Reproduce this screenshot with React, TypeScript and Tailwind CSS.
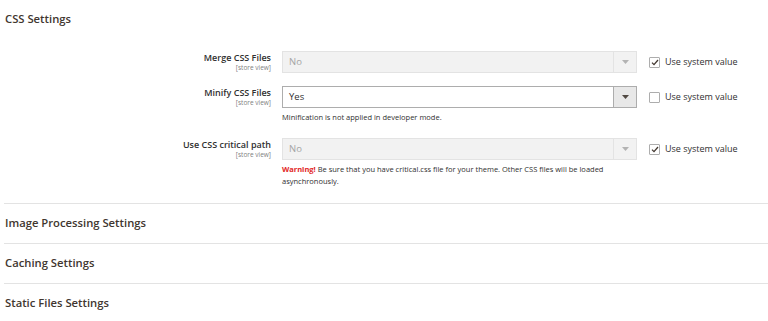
import type { ReactNode } from "react";

function Caret({ disabled }: { disabled?: boolean }) {
  return (
    <svg width="7" height="4" viewBox="0 0 7 4">
      <path d="M0 0h7L3.5 4z" fill={disabled ? "#b3b3b3" : "#514943"} />
    </svg>
  );
}

function Select({ value, disabled }: { value: string; disabled?: boolean }) {
  return (
    <div
      className={`flex h-[22px] w-[355px] items-stretch border ${
        disabled ? "border-[#e3e3e3] bg-[#f2f2f2] text-[#a5a5a5]" : "border-[#adadad] bg-white text-[#303030]"
      }`}
    >
      <div className="flex flex-1 items-center pl-[6px] text-[9.5px]">{value}</div>
      <div
        className={`flex w-[23px] items-center justify-center border-l ${
          disabled ? "border-[#e3e3e3] bg-[#f2f2f2]" : "border-[#adadad] bg-[#e8e8e8]"
        }`}
      >
        <Caret disabled={disabled} />
      </div>
    </div>
  );
}

function SystemValue({ checked }: { checked: boolean }) {
  return (
    <label className="flex items-center gap-[5px] text-[9px] text-[#303030]">
      <span className="flex h-[11px] w-[11px] items-center justify-center rounded-[1px] border border-[#adadad] bg-white">
        {checked && (
          <svg width="8" height="7" viewBox="0 0 8 7">
            <path d="M1 3.6l2 2L7 1" fill="none" stroke="#41362f" strokeWidth="1.3" />
          </svg>
        )}
      </span>
      Use system value
    </label>
  );
}

function Row({ label, value, disabled, checked, note }: { label: string; value: string; disabled?: boolean; checked: boolean; note?: ReactNode }) {
  return (
    <div className="flex items-start">
      <div className="w-[271px] pt-[1px] text-right">
        <div className="text-[9px] leading-[11px] font-semibold text-[#303030]">{label}</div>
        <div className="text-[6.5px] leading-[9px] text-[#808080]">[store view]</div>
      </div>
      <div className="ml-[11px] w-[355px]">
        <Select value={value} disabled={disabled} />
        {note && <div className="mt-[3px] text-[7.5px] leading-[12px] text-[#303030]">{note}</div>}
      </div>
      <div className="ml-[12px] flex h-[22px] items-center">
        <SystemValue checked={checked} />
      </div>
    </div>
  );
}

function Section({ title }: { title: string }) {
  return (
    <div className="ml-[4px] flex h-[40px] items-center border-t border-[#e3e3e3] pl-[1px]">
      <h2 className="text-[11.25px] font-semibold text-[#41362f]">{title}</h2>
    </div>
  );
}

export default function App() {
  return (
    <main className="h-[321px] w-[768px] overflow-hidden bg-white font-['Open_Sans',sans-serif]">
      <div className="flex h-[38px] items-center pl-[5px]">
        <h2 className="text-[11.25px] font-semibold text-[#41362f]">CSS Settings</h2>
      </div>
      <div className="mt-[13px] flex flex-col">
        <Row label="Merge CSS Files" value="No" disabled checked />
        <div className="mt-[13px]">
          <Row label="Minify CSS Files" value="Yes" checked={false} note="Minification is not applied in developer mode." />
        </div>
        <div className="mt-[15px]">
          <Row
            label="Use CSS critical path"
            value="No"
            disabled
            checked
            note={
              <>
                <span className="font-bold text-[#e22626]">Warning!</span> Be sure that you have critical.css file for your theme. Other CSS
                files will be loaded asynchronously.
              </>
            }
          />
        </div>
      </div>
      <div className="mt-[16px]">
        <Section title="Image Processing Settings" />
        <Section title="Caching Settings" />
        <Section title="Static Files Settings" />
      </div>
    </main>
  );
}
